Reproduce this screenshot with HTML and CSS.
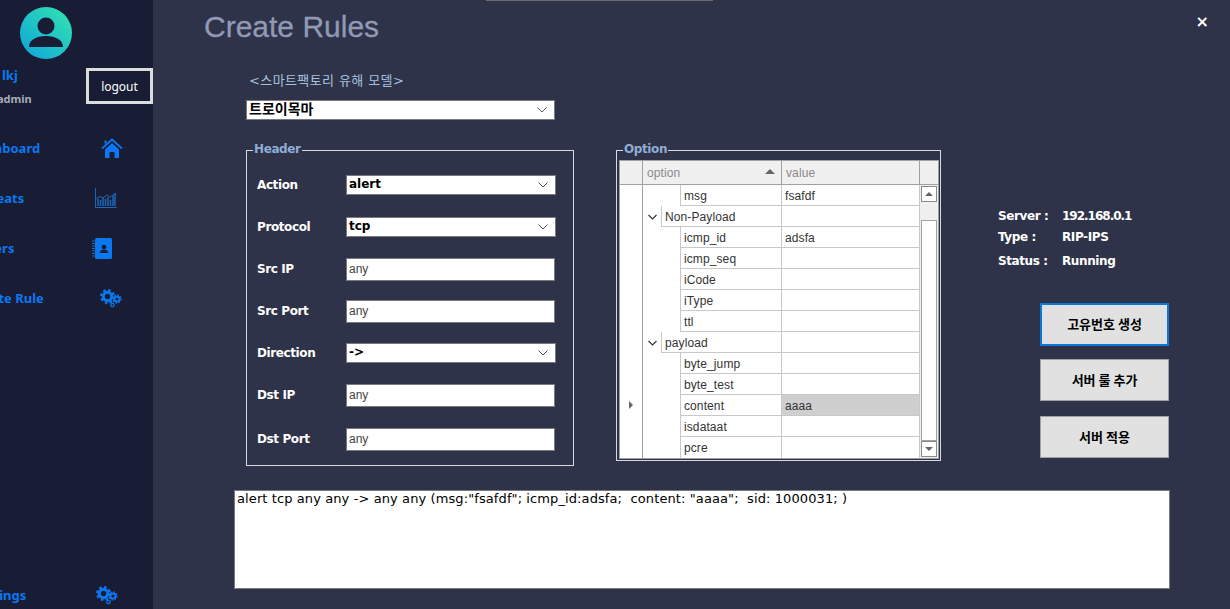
FILE: index.html
```html
<!DOCTYPE html>
<html>
<head>
  <title>Create Rules</title>
  <link rel="stylesheet" href="styles.css">
</head>
<body>
  <svg class="defs" width="0" height="0">
    <symbol id="gears" viewBox="0 0 22 19">
      <circle cx="7.5" cy="7.5" r="4.2" fill="none" stroke="#0a78f0" stroke-width="3"/>
      <circle cx="7.5" cy="7.5" r="6.4" fill="none" stroke="#0a78f0" stroke-width="2.2" stroke-dasharray="2.6 2.4"/>
      <circle cx="17" cy="10" r="2.6" fill="none" stroke="#0a78f0" stroke-width="2"/>
      <circle cx="17" cy="10" r="4" fill="none" stroke="#0a78f0" stroke-width="1.4" stroke-dasharray="1.6 1.5"/>
      <circle cx="12.5" cy="16" r="1.7" fill="none" stroke="#0a78f0" stroke-width="1.3"/>
    </symbol>
  </svg>

  <div class="app">
    <aside class="sidebar">
      <div class="avatar">
        <svg width="52" height="52" viewBox="0 0 52 52">
          <defs>
            <linearGradient id="avatarFill" x1="0" y1="1" x2="1" y2="0">
              <stop offset="0" stop-color="#0fa2dc"/>
              <stop offset="1" stop-color="#33e6ae"/>
            </linearGradient>
          </defs>
          <circle cx="26" cy="26" r="26" fill="url(#avatarFill)"/>
          <circle cx="26" cy="19" r="8.5" fill="#181d35"/>
          <path d="M9 40c0-7 7-11 17-11s17 4 17 11z" fill="#181d35"/>
        </svg>
      </div>

      <div class="profile">
        <div class="profile-names">
          <div class="user-name">lkj</div>
          <div class="user-role">admin</div>
        </div>
        <button class="logout">logout</button>
      </div>

      <nav class="nav">
        <a class="nav-item">
          <span class="nav-label label-dashboard">Dashboard</span>
          <svg class="icon-home" width="22" height="20" viewBox="0 0 22 20">
            <path d="M1 10.500 11 1.500l10 9" fill="none" stroke="#0a78f0" stroke-width="1.800"/>
            <path d="M4 11.500 11 5l7 6.500V20h-4.500v-6h-5v6H4z" fill="#0a78f0"/>
            <rect x="3.500" y="2.500" width="2" height="3" fill="#0a78f0"/>
          </svg>
        </a>
        <a class="nav-item">
          <span class="nav-label label-threats">Threats</span>
          <svg class="icon-chart" width="22" height="20" viewBox="0 0 22 20">
            <path d="M.5 0v19.500H22" fill="none" stroke="#1c66b8" stroke-width="1"/>
            <path d="M3 18v-7M5.500 18v-6M8 18V9.500M10.500 18v-7M13 18V9M15.500 18v-6M18 18V7.500M20 18V5.500" stroke="#1c66b8" stroke-width="1.500"/>
            <path d="M1 10.500l4-2 3 1.500 4-3 3 2 6-4" fill="none" stroke="#1c66b8" stroke-width="1"/>
          </svg>
        </a>
        <a class="nav-item">
          <span class="nav-label label-users">Users</span>
          <svg class="icon-book" width="20" height="21" viewBox="0 0 20 21">
            <rect x="3" y="0" width="17" height="21" rx="1.500" fill="#0a78f0"/>
            <path d="M0 3h4M0 5.500h4M0 8h4M0 10.500h4M0 13h4M0 15.500h4M0 18h4" stroke="#1c66b8" stroke-width="1"/>
            <circle cx="12" cy="9" r="2.300" fill="#181d35"/>
            <path d="M8 15c0-2.500 1.500-3.500 4-3.500s4 1 4 3.500z" fill="#181d35"/>
          </svg>
        </a>
        <a class="nav-item">
          <span class="nav-label label-rule">Create Rule</span>
          <svg class="icon-gears" width="22" height="19"><use href="#gears"/></svg>
        </a>
      </nav>

      <a class="nav-item nav-settings">
        <span class="nav-label label-settings">Settings</span>
        <svg class="icon-gears-low" width="22" height="19"><use href="#gears"/></svg>
      </a>
    </aside>

    <main class="main">
      <div class="top-line"></div>
      <header class="title-bar">
        <h1 class="title">Create Rules</h1>
        <span class="close">×</span>
      </header>

      <div class="model">
        <div class="model-label">&lt;스마트팩토리 유해 모델&gt;</div>
        <div class="combo combo-model"><span>트로이목마</span>
          <svg class="chevron" width="10" height="6" viewBox="0 0 10 6"><path d="M.5.500 5 5 9.500.500" fill="none" stroke="#555"/></svg>
        </div>
      </div>

      <div class="panels">
        <fieldset class="group group-header">
          <legend>Header</legend>
          <div class="form-grid">
            <label>Action</label>
            <div class="combo"><span>alert</span><svg class="chevron" width="10" height="6" viewBox="0 0 10 6"><path d="M.5.500 5 5 9.500.500" fill="none" stroke="#555"/></svg></div>
            <label>Protocol</label>
            <div class="combo"><span>tcp</span><svg class="chevron" width="10" height="6" viewBox="0 0 10 6"><path d="M.5.500 5 5 9.500.500" fill="none" stroke="#555"/></svg></div>
            <label>Src IP</label>
            <input class="field" type="text" value="any">
            <label>Src Port</label>
            <input class="field" type="text" value="any">
            <label>Direction</label>
            <div class="combo"><span>-&gt;</span><svg class="chevron" width="10" height="6" viewBox="0 0 10 6"><path d="M.5.500 5 5 9.500.500" fill="none" stroke="#555"/></svg></div>
            <label>Dst IP</label>
            <input class="field" type="text" value="any">
            <label class="last-row">Dst Port</label>
            <input class="field last-row" type="text" value="any">
          </div>
        </fieldset>

        <fieldset class="group group-option">
          <legend>Option</legend>
          <table class="option-table">
            <colgroup>
              <col class="col-head"><col class="col-tree"><col class="col-tree"><col class="col-name"><col class="col-value"><col class="col-scroll">
            </colgroup>
            <thead>
              <tr>
                <th></th>
                <th colspan="3" class="sort-head">option<span class="sort-mark"></span></th>
                <th>value</th>
                <th></th>
              </tr>
            </thead>
            <tbody>
              <tr>
                <td class="row-head"></td>
                <td class="blank" colspan="2"></td>
                <td>msg</td>
                <td>fsafdf</td>
                <td class="scrollbar" rowspan="13">
                  <div class="scroll-inner">
                    <span class="scroll-btn"><i class="tri-up"></i></span>
                    <span class="scroll-gap"></span>
                    <span class="scroll-thumb"></span>
                    <span class="scroll-btn"><i class="tri-down"></i></span>
                  </div>
                </td>
              </tr>
              <tr>
                <td class="row-head"></td>
                <td class="blank toggle"><svg width="9" height="6" viewBox="0 0 9 6"><path d="M.5 1 4.500 5 8.500 1" fill="none" stroke="#333" stroke-width="1.200"/></svg></td>
                <td colspan="2">Non-Payload</td>
                <td></td>
              </tr>
              <tr><td class="row-head"></td><td class="blank" colspan="2"></td><td>icmp_id</td><td>adsfa</td></tr>
              <tr><td class="row-head"></td><td class="blank" colspan="2"></td><td>icmp_seq</td><td></td></tr>
              <tr><td class="row-head"></td><td class="blank" colspan="2"></td><td>iCode</td><td></td></tr>
              <tr><td class="row-head"></td><td class="blank" colspan="2"></td><td>iType</td><td></td></tr>
              <tr><td class="row-head"></td><td class="blank" colspan="2"></td><td>ttl</td><td></td></tr>
              <tr>
                <td class="row-head"></td>
                <td class="blank toggle"><svg width="9" height="6" viewBox="0 0 9 6"><path d="M.5 1 4.500 5 8.500 1" fill="none" stroke="#333" stroke-width="1.200"/></svg></td>
                <td colspan="2">payload</td>
                <td></td>
              </tr>
              <tr><td class="row-head"></td><td class="blank" colspan="2"></td><td>byte_jump</td><td></td></tr>
              <tr><td class="row-head"></td><td class="blank" colspan="2"></td><td>byte_test</td><td></td></tr>
              <tr><td class="row-head"><i class="row-pointer"></i></td><td class="blank" colspan="2"></td><td>content</td><td class="selected">aaaa</td></tr>
              <tr><td class="row-head"></td><td class="blank" colspan="2"></td><td>isdataat</td><td></td></tr>
              <tr><td class="row-head"></td><td class="blank" colspan="2"></td><td>pcre</td><td></td></tr>
            </tbody>
          </table>
        </fieldset>

        <section class="side">
          <dl class="server-info">
            <dt>Server :</dt><dd class="server-ip">192.168.0.1</dd>
            <dt>Type :</dt><dd>RIP-IPS</dd>
            <dt class="status">Status :</dt><dd class="status">Running</dd>
          </dl>
          <div class="actions">
            <button class="btn btn-focus">고유번호 생성</button>
            <button class="btn">서버 룰 추가</button>
            <button class="btn">서버 적용</button>
          </div>
        </section>
      </div>

      <textarea class="rule-output">alert tcp any any -&gt; any any (msg:"fsafdf"; icmp_id:adsfa;  content: "aaaa";  sid: 1000031; )</textarea>
    </main>
  </div>
</body>
</html>
```

FILE: styles.css
```css
* {
  box-sizing: border-box;
}

html, body {
  margin: 0;
  height: 100%;
  overflow: hidden;
}

body {
  font-family: "DejaVu Sans", "Noto Sans CJK KR", sans-serif;
  font-size: 12px;
  background-color: #2f3349;
}

.defs {
  position: absolute;
}

.app {
  display: flex;
  height: 609px;
}

/* sidebar */
.sidebar {
  width: 153px;
  flex-shrink: 0;
  display: flex;
  flex-direction: column;
  background-color: #181d35;
  overflow: hidden;
}

.avatar {
  height: 67px;
  padding: 7px 0 0 20px;
}

.avatar svg {
  display: block;
}

.profile {
  height: 37px;
  display: flex;
  justify-content: space-between;
  align-items: flex-end;
}

.profile-names {
  align-self: flex-start;
}

.user-name {
  color: #0a78f0;
  font-family: "Noto Sans", sans-serif;
  font-weight: bold;
  font-size: 13px;
  line-height: 16px;
  padding-left: 2px;
}

.user-role {
  color: #a9acb8;
  font-family: "Noto Sans", sans-serif;
  font-weight: bold;
  font-size: 11px;
  line-height: 16px;
  margin-top: 8px;
  margin-left: -3px;
}

.logout {
  width: 67px;
  height: 36px;
  border: 3px solid #dcdcdc;
  background-color: #181d35;
  color: #fff;
  font-family: "Noto Sans", sans-serif;
  font-size: 12px;
  padding: 0;
}

.nav {
  padding-top: 19px;
}

.nav-item {
  display: flex;
  align-items: center;
  height: 50px;
  color: #0a78f0;
  font-family: "Noto Sans", sans-serif;
  font-weight: bold;
  font-size: 13px;
}

.nav-label {
  flex-shrink: 0;
  white-space: nowrap;
}

/* labels run off the left edge of the window */
.label-dashboard { width: 131px; margin-left: -30px; }
.label-threats { width: 120px; margin-left: -25px; }
.label-users { width: 114px; margin-left: -22px; }
.label-rule { width: 131px; margin-left: -31px; }
.label-settings { width: 123px; margin-left: -27px; }

.nav-settings {
  margin-top: auto;
  height: 28px;
}

/* main area */
.main {
  flex: 1;
  min-width: 0;
}

.top-line {
  width: 227px;
  height: 1px;
  margin-left: 333px;
  background-color: #6b6b6b;
}

.title-bar {
  display: flex;
  justify-content: space-between;
  height: 71px;
  padding-left: 51px;
}

.title {
  margin: 8px 0 0;
  font-family: "Liberation Sans", Arial, sans-serif;
  font-weight: normal;
  font-size: 30px;
  line-height: 36px;
  color: #919ab5;
  -webkit-text-stroke: .3px #919ab5;
}

.close {
  margin: 12px 21px 0 0;
  color: #fff;
  font-size: 16px;
  font-weight: bold;
  line-height: 18px;
}

.model {
  height: 70px;
  margin-left: 93px;
}

.model-label {
  margin-left: 3px;
  height: 28px;
  line-height: 18px;
  color: #a8c0de;
  font-size: 13px;
  letter-spacing: .4px;
}

.combo {
  display: flex;
  align-items: center;
  justify-content: space-between;
  width: 210px;
  height: 20px;
  padding: 0 7px 0 2px;
  background-color: #fff;
  border: 1px solid #7a7a7a;
  color: #000;
  font-weight: bold;
  font-size: 12px;
  line-height: 16px;
}

.combo span {
  margin-top: -2px;
}

.combo-model {
  width: 309px;
  font-size: 14px;
}

.panels {
  display: flex;
  align-items: flex-start;
  margin-left: 93px;
}

.group {
  margin: 0;
  min-width: 0;
  border: 1px solid #d8d8e0;
  color: #fff;
}

.group legend {
  padding: 0 1px 2px;
  color: #8fadd4;
  font-weight: bold;
  font-size: 12px;
  letter-spacing: -.4px;
  line-height: 14px;
}

.group-header {
  width: 328px;
  height: 324px;
  padding: 3px 17px 0 10px;
}

.group-header legend {
  margin-left: -4px;
}

.form-grid {
  display: grid;
  grid-template-columns: 89px 210px;
  grid-auto-rows: 42px;
  align-items: center;
  padding-top: 3px;
}

.form-grid label {
  font-weight: bold;
  font-size: 12px;
  letter-spacing: -.4px;
}

.field {
  width: 209px;
  height: 23px;
  margin: 0;
  padding: 0 2px;
  border: 1px solid #7a7a7a;
  background-color: #fff;
  color: #444;
  font-family: "Liberation Sans", sans-serif;
  font-size: 12px;
}

.last-row {
  margin-top: 4px;
}

.group-option {
  width: 325px;
  height: 319px;
  margin-left: 42px;
  padding: 2px 2px 0;
}

.group-option legend {
  margin-left: 4px;
}

.option-table {
  width: 319px;
  border-collapse: collapse;
  table-layout: fixed;
  background-color: #fff;
  color: #333;
  font-family: "Liberation Sans", sans-serif;
  font-size: 12px;
  letter-spacing: .1px;
  outline: 1px solid #a0a0a0;
  outline-offset: -1px;
}

.col-head { width: 23px; }
.col-tree { width: 19px; }
.col-name { width: 101px; }
.col-value { width: 138px; }
.col-scroll { width: 19px; }

.option-table th {
  height: 24px;
  padding: 0 4px;
  border: 1px solid #a0a0a0;
  background-color: #f0f0f0;
  color: #8a8a8a;
  font-weight: normal;
  text-align: left;
}

.sort-head {
  position: relative;
}

.sort-mark {
  position: absolute;
  right: 6px;
  top: 8px;
  border-left: 5px solid transparent;
  border-right: 5px solid transparent;
  border-bottom: 5px solid #666;
}

.option-table td {
  height: 21px;
  padding: 1px 3px 0;
  border: 1px solid #c8c8c8;
  border-top: 0;
  white-space: nowrap;
}

.option-table td.row-head {
  border: 0;
  border-right: 1px solid #a0a0a0;
  position: relative;
}

.option-table td.blank {
  border: 0;
}

.toggle svg {
  display: block;
  margin: 0 auto;
}

.row-pointer {
  position: absolute;
  left: 9px;
  top: 6px;
  border-top: 4px solid transparent;
  border-bottom: 4px solid transparent;
  border-left: 4px solid #666;
}

.option-table td.selected {
  background-color: #cfcfcf;
}

.option-table td.scrollbar {
  padding: 0;
  height: 273px;
  border: 0;
  background-color: #f0f0f0;
  vertical-align: top;
}

.scroll-inner {
  display: flex;
  flex-direction: column;
  height: 273px;
  padding: 1px 2px 1px 1px;
}

.scroll-btn {
  display: flex;
  align-items: center;
  justify-content: center;
  height: 16px;
  flex-shrink: 0;
  background-color: #fff;
  border: 1px solid #8a8a8a;
}

.scroll-gap {
  height: 18px;
  flex-shrink: 0;
}

.scroll-thumb {
  flex: 1;
  background-color: #fff;
  border: 1px solid #a0a0a0;
}

.tri-up, .tri-down {
  border-left: 4px solid transparent;
  border-right: 4px solid transparent;
}

.tri-up {
  border-bottom: 4px solid #666;
}

.tri-down {
  border-top: 4px solid #666;
}

.side {
  margin-left: 57px;
  padding-top: 63px;
  color: #fff;
}

.server-info {
  display: grid;
  grid-template-columns: 64px 1fr;
  grid-auto-rows: 21px;
  align-items: center;
  margin: 0;
  font-weight: bold;
  font-size: 12px;
  letter-spacing: -.4px;
}

.server-info dd {
  margin: 0;
}

.server-info .server-ip {
  letter-spacing: -1px;
}

.server-info .status {
  margin-top: 6px;
}

.actions {
  display: flex;
  flex-direction: column;
  width: 129px;
  margin: 35px 0 0 42px;
}

.btn {
  height: 42px;
  margin-bottom: 15px;
  border: 1px solid #a0a0a0;
  background-color: #e1e1e1;
  color: #000;
  font-family: "Noto Sans CJK KR", sans-serif;
  font-weight: bold;
  font-size: 13px;
  padding: 0 0 2px;
}

.btn-focus {
  height: 43px;
  margin-bottom: 13px;
  border: 2px solid #0a78d7;
}

.rule-output {
  display: block;
  width: 936px;
  height: 99px;
  margin: 17px 0 0 81px;
  padding: 0 2px;
  border: 1px solid #7a7a7a;
  background-color: #fff;
  color: #000;
  font-family: "DejaVu Sans", sans-serif;
  font-size: 13px;
  letter-spacing: .1px;
  resize: none;
  outline: none;
}
```
